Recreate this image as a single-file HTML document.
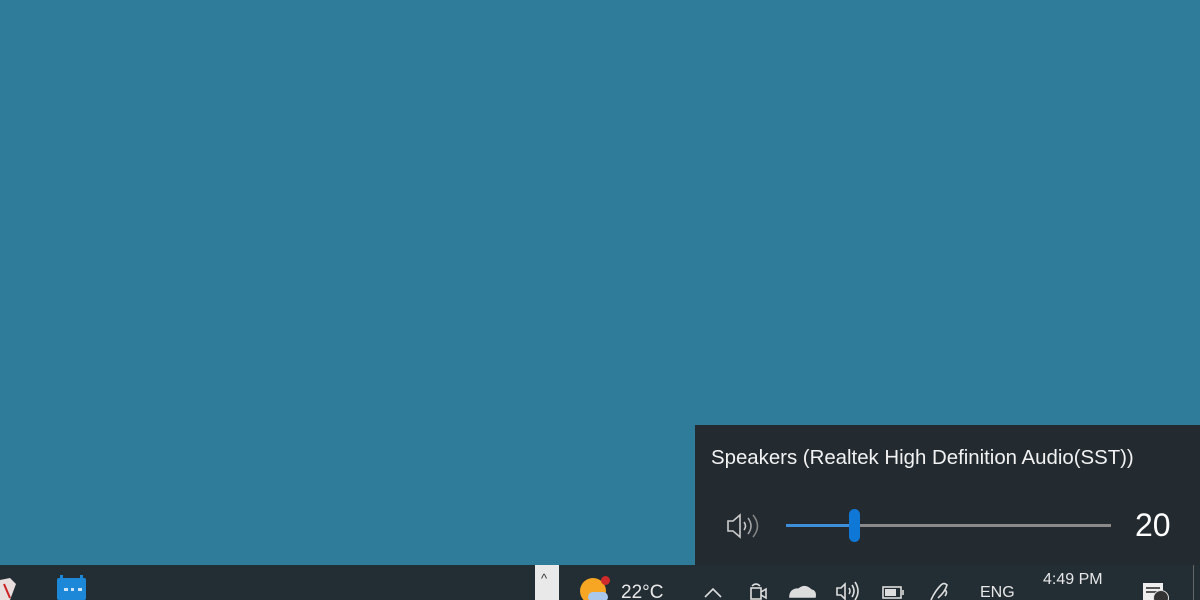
<!DOCTYPE html>
<html><head><meta charset="utf-8"><style>
html,body{margin:0;padding:0;width:1200px;height:600px;overflow:hidden;background:#2e7b9a;font-family:"Liberation Sans",sans-serif;}
#w{position:relative;width:1200px;height:600px;overflow:hidden}
.abs{position:absolute}
.tb{left:0;top:565px;width:1200px;height:35px;background:#232d34}
.fly{left:695px;top:425px;width:505px;height:140px;background:#232b31}
.t{color:#fff;white-space:nowrap}
</style></head><body><div id="w">
<div class="abs fly"></div>
<div class="abs t" style="left:711px;top:447px;font-size:20.4px;color:#f2f2f2">Speakers (Realtek High Definition Audio(SST))</div>
<svg class="abs" style="left:724px;top:511px" width="40" height="30" viewBox="0 0 40 30">
<path d="M4 10h5l7-6v22l-7-6H4z" fill="none" stroke="#ccc" stroke-width="1.6"/>
<path d="M20 11q3 4 0 8" fill="none" stroke="#ccc" stroke-width="1.6"/>
<path d="M24 7q6 8 0 16" fill="none" stroke="#aaa" stroke-width="1.5"/>
<path d="M29 4q9 11 0 22" fill="none" stroke="#888" stroke-width="1.5"/>
</svg>
<div class="abs" style="left:786px;top:524px;width:68px;height:3px;background:#3d8fdb"></div>
<div class="abs" style="left:854px;top:524px;width:257px;height:3px;background:#8a8a8a"></div>
<div class="abs" style="left:849px;top:509px;width:11px;height:33px;border-radius:6px;background:#0f78d7"></div>
<div class="abs t" style="left:1135px;top:507px;font-size:32px">20</div>

<div class="abs tb"></div>
<svg class="abs" style="left:0;top:576px" width="20" height="24"><path d="M0 4l10-2 6 6-6 16H0z" fill="#e9dede"/><path d="M4 8l6 14" stroke="#c22" stroke-width="2"/></svg>
<div class="abs" style="left:57px;top:578px;width:29px;height:22px;background:#1e88d8;border-radius:2px"></div>
<div class="abs" style="left:60px;top:575px;width:3px;height:6px;background:#1e88d8"></div>
<div class="abs" style="left:80px;top:575px;width:3px;height:6px;background:#1e88d8"></div>
<div class="abs" style="left:64px;top:588px;width:18px;height:3px;border-top:3px dotted #cfe6fa"></div>
<div class="abs" style="left:535px;top:565px;width:24px;height:35px;background:#e9e9e9"></div>
<div class="abs" style="left:541px;top:571px;font-size:13px;color:#333">^</div>
<div class="abs" style="left:580px;top:578px;width:26px;height:26px;border-radius:50%;background:#f6a623"></div>
<div class="abs" style="left:601px;top:576px;width:9px;height:9px;border-radius:50%;background:#d02a2a"></div>
<div class="abs" style="left:588px;top:592px;width:20px;height:10px;border-radius:5px;background:#a9c8ec"></div>
<div class="abs t" style="left:621px;top:582px;font-size:19px;color:#e8e8e8">22°C</div>
<svg class="abs" style="left:700px;top:578px" width="480" height="22" fill="none" stroke="#ddd" stroke-width="1.6">
<path d="M5 19l8-8 8 8"/>
<rect x="51" y="10" width="10" height="11"/><path d="M61 14l5-3v9l-5-3M52 8q4-4 8 0"/>
<path d="M90 19q0-8 9-8 6-5 12 1 5 1 4 7z" fill="#ddd"/>
<path d="M137 10h4l4-4v15l-4-4h-4zM149 10q2 3 0 6M152 7q4 6 0 12M155 4q6 9 0 18" />
<rect x="183" y="9" width="18" height="11"/><rect x="185" y="11" width="11" height="7" fill="#ddd" stroke="none"/><path d="M203 12v5"/>
<path d="M231 22q4-9 10-15 3-3 6 0-2 7-9 13M245 12q3 2 0 6"/>
</svg>
<div class="abs t" style="left:980px;top:584px;font-size:16px;color:#e8e8e8">ENG</div>
<div class="abs t" style="left:1043px;top:571px;font-size:16px;color:#e8e8e8">4:49 PM</div>
<div class="abs" style="left:1143px;top:583px;width:20px;height:17px;background:#eee"></div>
<div class="abs" style="left:1146px;top:587px;width:14px;height:2px;background:#555"></div>
<div class="abs" style="left:1146px;top:591px;width:14px;height:2px;background:#555"></div>
<div class="abs" style="left:1153px;top:590px;width:14px;height:14px;border-radius:50%;background:#333;border:1px solid #ddd"></div>
<div class="abs" style="left:1193px;top:565px;width:1px;height:35px;background:#666"></div>
</div></body></html>
